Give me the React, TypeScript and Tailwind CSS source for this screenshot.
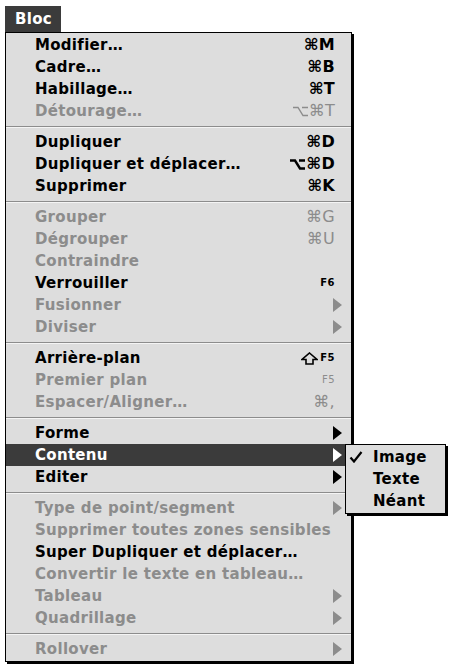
import type { ReactNode } from 'react';

type MenuItem =
    | 'sep'
    | {
          label: string;
          disabled?: boolean;
          shortcut?: ReactNode;
          arrow?: boolean;
          active?: boolean;
      };

const Arrow = ({ color }: { color: string }) => (
    <svg width="9" height="14" viewBox="0 0 9 14" className="block">
        <polygon points="0,0 9,7 0,14" fill={color} />
    </svg>
);

const Small = ({ children }: { children: ReactNode }) => (
    <span className="text-[10px] tracking-[0.5px]">{children}</span>
);

// outlined shift arrow, drawn because the font's glyph is too thin
const ShiftKey = () => (
    <svg width="17" height="13" viewBox="0 0 17 13" className="block mr-[2px]">
        <path d="M8.5 1 L16 7.5 L12 7.5 L12 12 L5 12 L5 7.5 L1 7.5 Z" fill="none" stroke="#000" strokeWidth="1.6" strokeLinejoin="miter" />
    </svg>
);

const OptionKey = ({ color, bold }: { color: string; bold?: boolean }) => (
    <svg width="15" height="11" viewBox="0 0 15 11" className="block mr-[1px]">
        <path d="M0 1.5 H5 L10 9.5 H15 M9 1.5 H15" fill="none" stroke={color} strokeWidth={bold ? 2.4 : 1.4} />
    </svg>
);

const Opt = ({ keys, disabled }: { keys: string; disabled?: boolean }) => (
    <span className="flex items-center">
        <OptionKey color={disabled ? '#8c8c8c' : '#000'} bold={!disabled} />
        {keys}
    </span>
);

const items: MenuItem[] = [
    { label: 'Modifier…', shortcut: '⌘M' },
    { label: 'Cadre…', shortcut: '⌘B' },
    { label: 'Habillage…', shortcut: '⌘T' },
    { label: 'Détourage…', disabled: true, shortcut: <Opt keys="⌘T" disabled /> },
    'sep',
    { label: 'Dupliquer', shortcut: '⌘D' },
    { label: 'Dupliquer et déplacer…', shortcut: <Opt keys="⌘D" /> },
    { label: 'Supprimer', shortcut: '⌘K' },
    'sep',
    { label: 'Grouper', disabled: true, shortcut: '⌘G' },
    { label: 'Dégrouper', disabled: true, shortcut: '⌘U' },
    { label: 'Contraindre', disabled: true },
    { label: 'Verrouiller', shortcut: <Small>F6</Small> },
    { label: 'Fusionner', disabled: true, arrow: true },
    { label: 'Diviser', disabled: true, arrow: true },
    'sep',
    {
        label: 'Arrière-plan',
        shortcut: (
            <span className="flex items-center">
                <ShiftKey />
                <Small>F5</Small>
            </span>
        ),
    },
    { label: 'Premier plan', disabled: true, shortcut: <Small>F5</Small> },
    { label: 'Espacer/Aligner…', disabled: true, shortcut: '⌘,' },
    'sep',
    { label: 'Forme', arrow: true },
    { label: 'Contenu', arrow: true, active: true },
    { label: 'Editer', arrow: true },
    'sep',
    { label: 'Type de point/segment', disabled: true, arrow: true },
    { label: 'Supprimer toutes zones sensibles', disabled: true },
    { label: 'Super Dupliquer et déplacer…' },
    { label: 'Convertir le texte en tableau…', disabled: true },
    { label: 'Tableau', disabled: true, arrow: true },
    { label: 'Quadrillage', disabled: true, arrow: true },
    'sep',
    { label: 'Rollover', disabled: true, arrow: true },
];

function SubMenu() {
    const sub = [
        { label: 'Image', checked: true },
        { label: 'Texte' },
        { label: 'Néant' },
    ];
    return (
        <div className="absolute top-0 left-[339px] z-10 w-[101px] bg-[#dddddd] border border-black shadow-[2px_2px_0_#000] pt-[1px] pb-[1px]">
            {sub.map((s) => (
                <div key={s.label} className="relative flex items-center h-[22px] pl-[27px] text-black">
                    {s.checked && (
                        <svg width="14" height="12" viewBox="0 0 14 12" className="absolute left-[3px] top-[5px]">
                            <path d="M1.5 6.5 L5 10.5 L12.5 1" fill="none" stroke="#000" strokeWidth="2.2" />
                        </svg>
                    )}
                    {s.label}
                </div>
            ))}
        </div>
    );
}

export default function App() {
    return (
        <div
            className="w-[451px] h-[667px] bg-white overflow-hidden text-[15px] font-bold leading-none tracking-[0.3px]"
            style={{ fontFamily: '"DejaVu Sans", Verdana, sans-serif' }}
        >
            <div className="ml-[5px] mt-[6px] w-[56px] h-[26px] bg-[#3b3b3b] text-white flex items-center pl-[10px]">
                Bloc
            </div>
            <div className="relative ml-[5px] w-[347px] bg-[#dddddd] border border-black shadow-[2px_2px_0_#000] pt-[1px] pb-[1px]">
                {items.map((it, i) => {
                    if (it === 'sep') {
                        return (
                            <div key={i} className="h-[9px] pt-[4px]">
                                <div className="h-px bg-[#8c8c8c]" />
                                <div className="h-px bg-[#f4f4f4]" />
                            </div>
                        );
                    }
                    const color = it.active ? 'text-white' : it.disabled ? 'text-[#8c8c8c]' : 'text-black';
                    return (
                        <div
                            key={i}
                            className={`relative flex items-center h-[22px] pl-[29px] ${color} ${
                                it.active ? 'bg-[#3b3b3b]' : ''
                            }`}
                        >
                            <span className="flex-1 whitespace-nowrap">{it.label}</span>
                            {it.shortcut && (
                                <span className={`mr-[16px] flex items-center text-[16px] ${it.disabled ? 'font-normal' : ''}`}>
                                    {it.shortcut}
                                </span>
                            )}
                            {it.arrow && (
                                <span className="mr-[9px]">
                                    <Arrow color={it.active ? '#ffffff' : it.disabled ? '#8c8c8c' : '#000000'} />
                                </span>
                            )}
                            {it.active && <SubMenu />}
                        </div>
                    );
                })}
            </div>
        </div>
    );
}
